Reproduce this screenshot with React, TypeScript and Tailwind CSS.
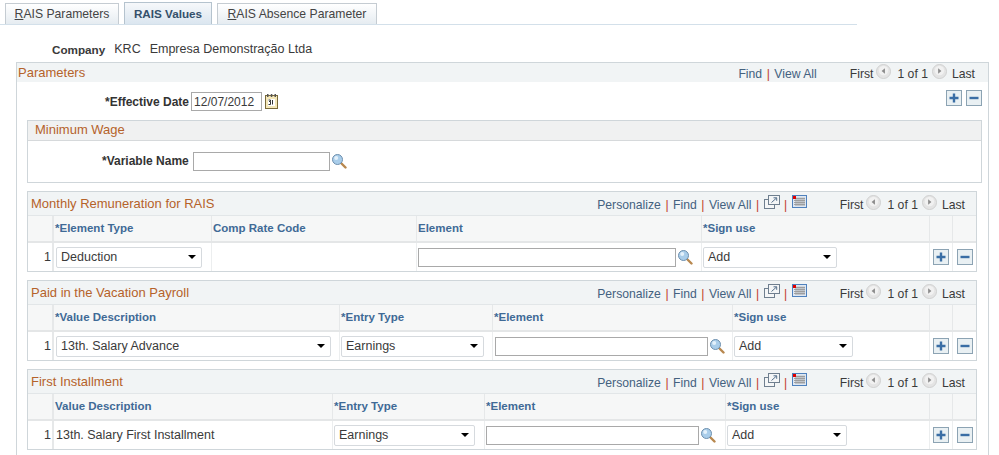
import React from 'react';

const LABEL = 'text-[12px] font-bold text-[#333]';

function Arrow({ dir }: { dir: 'left' | 'right' }) {
  return (
    <svg width="15" height="15" viewBox="0 0 16 16" className="mb-[6px]">
      <circle cx="8" cy="8" r="7.5" fill="#e4e4e4" stroke="#cfcfcf" />
      <circle cx="8" cy="7" r="5" fill="#f1f1f1" />
      <path d={dir === 'left' ? 'M9.5 4.5v6L6 7.5z' : 'M6.5 4.5v6l3.5-3z'} fill="#8c8c8c" />
    </svg>
  );
}

function AddButton() {
  return (
    <svg width="16" height="16" viewBox="0 0 16 16">
      <rect x="0.5" y="0.5" width="15" height="15" fill="#e9f0f3" stroke="#8ca3b3" />
      <path d="M6.8 3.5h2.4v3.3h3.3v2.4H9.2v3.3H6.8V9.2H3.5V6.8h3.3z" fill="#3a6ea5" />
    </svg>
  );
}

function RemoveButton() {
  return (
    <svg width="16" height="16" viewBox="0 0 16 16">
      <rect x="0.5" y="0.5" width="15" height="15" fill="#e9f0f3" stroke="#8ca3b3" />
      <rect x="3.5" y="6.8" width="9" height="2.4" fill="#3a6ea5" />
    </svg>
  );
}

function Lookup() {
  return (
    <svg width="16" height="16" viewBox="0 0 16 16" className="shrink-0">
      <path d="M9.5 9.5l5 5" stroke="#b8884f" strokeWidth="2.4" strokeLinecap="round" />
      <circle cx="6.5" cy="6.5" r="5" fill="#a9cdea" stroke="#6d8fae" />
      <circle cx="5.2" cy="5" r="2" fill="#e4f1fb" />
    </svg>
  );
}

function Calendar() {
  return (
    <svg width="13" height="15" viewBox="0 0 13 15">
      <rect x="0.5" y="1.5" width="12" height="13" fill="#f4e7b8" stroke="#7a6a3a" />
      <rect x="2" y="0" width="1.5" height="3" fill="#555" />
      <rect x="5.8" y="0" width="1.5" height="3" fill="#555" />
      <rect x="9.5" y="0" width="1.5" height="3" fill="#555" />
      <rect x="3" y="5" width="7" height="7" fill="#fff" />
      <path d="M3.5 6h2v1.5h-1.5M5.5 7.5v3h-2M7.5 6v4.5" fill="none" stroke="#333" />
    </svg>
  );
}

function NewWindow() {
  return (
    <svg width="16" height="14" viewBox="0 0 16 14">
      <rect x="0.5" y="4.5" width="10" height="9" fill="#f4f6f7" stroke="#6f7f8f" />
      <rect x="4.5" y="0.5" width="11" height="9" fill="#f4f6f7" stroke="#6f7f8f" />
      <path d="M7.5 7.5l5-4.5M9.5 2.8h3.2v3" fill="none" stroke="#55708c" />
    </svg>
  );
}

function GridIcon() {
  return (
    <svg width="15" height="13" viewBox="0 0 15 13">
      <rect x="0.5" y="0.5" width="14" height="12" fill="#dfe8f3" stroke="#4f81bd" />
      <path d="M2 3.5h11M2 5.5h11M2 7.5h11M2 9.5h11M4 2.5v8.5M6 2.5v8.5M8 2.5v8.5M10 2.5v8.5M12 2.5v8.5" stroke="#9a9a9a" strokeWidth="0.9" />
      <rect x="1" y="1" width="3" height="3" fill="#e00000" />
    </svg>
  );
}

function Select({ value, width, className }: { value: string; width: string; className?: string }) {
  return (
    <div className={`flex h-[21px] items-center justify-between rounded-[2px] border border-[#d6dade] bg-white pl-[4px] pr-[4px] text-[12.5px] text-[#3a3a3a] ${width} ${className ?? ''}`}>
      <span>{value}</span>
      <span className="mr-[1px] h-0 w-0 border-x-[4px] border-t-[4px] border-x-transparent border-t-black" />
    </div>
  );
}

function TextInput({ width }: { width: string }) {
  return <div className={`h-[19px] border border-[#a9a9a9] bg-white ${width}`} />;
}

function Sep() {
  return <span className="mx-[4.5px] text-[#c0392b]">|</span>;
}

function Pager({ tools }: { tools?: boolean }) {
  return (
    <div className="flex items-center pt-[3px] text-[12.2px] text-[#44617f]">
      {tools && <span>Personalize</span>}
      {tools && <Sep />}
      <span>Find</span>
      <Sep />
      <span>View All</span>
      {tools && <Sep />}
      {tools && <span className="mb-[6px]"><NewWindow /></span>}
      {tools && <Sep />}
      {tools && <span className="mb-[8px]"><GridIcon /></span>}
      <span className="ml-[33px] text-[#3a3a3a]">First</span>
      <span className="ml-[3px] mr-[6px]"><Arrow dir="left" /></span>
      <span className="text-[#3a3a3a]">1 of 1</span>
      <span className="ml-[4px] mr-[5px]"><Arrow dir="right" /></span>
      <span className="text-[#3a3a3a]">Last</span>
    </div>
  );
}

type GridProps = {
  title: string;
  cols: string;
  headers: string[];
  cells: React.ReactNode[];
  className?: string;
};

function DataGrid({ title, cols, headers, cells, className }: GridProps) {
  return (
    <section className={`ml-[10px] w-[950px] border border-[#cfd6da] ${className ?? ''}`}>
      <div className="flex h-[23px] items-center justify-between bg-[#f1f4f5] pl-[3px] pr-[11px]">
        <h3 className="text-[13px] text-[#b5622a]">{title}</h3>
        <Pager tools />
      </div>
      <div className={`grid h-[26px] items-center border-t border-[#e2e6e8] bg-[#f6f7f7] ${cols}`}>
        <div className="h-full border-r-[2px] border-[#e6e8e9]" />
        {headers.map((h) => (
          <div key={h} className="flex h-full items-center border-r border-[#e6e8e9] pl-[1px] text-[11.5px] font-bold text-[#3f6a96]">{h}</div>
        ))}
        <div className="h-full border-r border-[#e6e8e9]" />
        <div className="h-full" />
      </div>
      <div className={`grid h-[30px] border-t-[2px] border-[#e4e6e7] bg-white ${cols}`}>
        <div className="flex items-center justify-end border-r-[2px] border-[#e6e8e9] pr-[1px] text-[12.5px] text-[#3a3a3a]">1</div>
        {cells.map((c, i) => (
          <div key={i} className="flex items-center border-r border-[#eceeef] pl-[1px] text-[12.5px] text-[#3a3a3a]">{c}</div>
        ))}
        <div className="flex items-center justify-center border-r border-[#eceeef]"><AddButton /></div>
        <div className="flex items-center justify-center"><RemoveButton /></div>
      </div>
    </section>
  );
}

function ElementInput({ width, className }: { width: string; className?: string }) {
  return (
    <div className={`flex items-center gap-[1px] ${className ?? ''}`}>
      <TextInput width={width} />
      <Lookup />
    </div>
  );
}

export default function App() {
  return (
    <div className="h-[455px] w-[999px] overflow-hidden bg-white font-['Liberation_Sans',Arial,sans-serif]">
      {/* Tabs */}
      <nav className="ml-0 flex h-[25px] w-[857px] items-end gap-[5px] border-b border-[#d3e0ea] pl-[5px] pt-[3px] text-[12.2px]">
        <div className="flex h-[21px] w-[114px] items-center justify-center border border-b-0 border-[#c5ccd2] bg-gradient-to-b from-white to-[#e6ecf1] text-[#444]"><span><u>R</u>AIS Parameters</span></div>
        <div className="flex h-[22px] w-[88px] items-center justify-center border border-b-0 border-[#b5c3ce] bg-gradient-to-b from-[#f6f8fa] to-[#dbe6f0] pt-[1px] text-[11.7px] font-bold text-[#34506b]">RAIS Values</div>
        <div className="flex h-[21px] w-[160px] items-center justify-center border border-b-0 border-[#c5ccd2] bg-gradient-to-b from-white to-[#e6ecf1] text-[#444]"><span><u>R</u>AIS Absence Parameter</span></div>
      </nav>

      {/* Company */}
      <div className="flex h-[37px] items-end pb-[3px] pl-[52px] text-[12.5px] text-[#3a3a3a]">
        <span className="text-[11.7px] font-bold">Company</span>
        <span className="ml-[9px]">KRC</span>
        <span className="ml-[9px]">Empresa Demonstração Ltda</span>
      </div>

      {/* Parameters */}
      <main className="ml-[16px] h-[393px] w-[973px] border border-b-0 border-[#cfd6da]">
        <div className="flex h-[19px] items-center justify-between bg-[#f1f4f5] pl-[1px] pr-[13px]">
          <h2 className="text-[13px] text-[#b5622a]">Parameters</h2>
          <Pager />
        </div>

        <div className="flex h-[38px] items-start justify-between pr-[6px]">
          <div className="ml-[88px] mt-[10px] flex items-center">
            <span className={LABEL}>*Effective Date</span>
            <div className="ml-[2px] flex h-[19px] w-[71px] items-center border border-[#a9a9a9] pl-[2px] text-[12px] text-[#3a3a3a]">12/07/2012</div>
            <span className="ml-[3px]"><Calendar /></span>
          </div>
          <div className="mt-[8px] flex gap-[4px]">
            <AddButton />
            <RemoveButton />
          </div>
        </div>

        {/* Minimum Wage */}
        <section className="ml-[10px] h-[63px] w-[955px] border border-[#cfd6da]">
          <div className="flex h-[20px] items-center border-b border-[#d6d9db] bg-[#f0f1f1] pb-[1px] pl-[7px] text-[13px] text-[#b5622a]">Minimum Wage</div>
          <div className="flex h-[40px] items-center pl-[74px]">
            <span className={LABEL}>*Variable Name</span>
            <div className="ml-[4px] flex items-center gap-[1px]">
              <TextInput width="w-[137px]" />
              <Lookup />
            </div>
          </div>
        </section>

        <DataGrid
          className="mt-[8px]"
          title="Monthly Remuneration for RAIS"
          cols="grid-cols-[26px_158px_205px_285px_228px_23px_1fr]"
          headers={['*Element Type', 'Comp Rate Code', 'Element', '*Sign use']}
          cells={[
            <Select value="Deduction" width="w-[146px]" className="ml-[1px]" />,
            null,
            <ElementInput width="w-[258px]" />,
            <Select value="Add" width="w-[134px]" />,
          ]}
        />
        <DataGrid
          className="mt-[8px]"
          title="Paid in the Vacation Payroll"
          cols="grid-cols-[26px_286px_153px_240px_197px_23px_1fr]"
          headers={['*Value Description', '*Entry Type', '*Element', '*Sign use']}
          cells={[
            <Select value="13th. Salary Advance" width="w-[275px]" className="ml-[1px]" />,
            <Select value="Earnings" width="w-[143px]" />,
            <ElementInput width="w-[213px]" className="ml-[1px]" />,
            <Select value="Add" width="w-[119px]" />,
          ]}
        />
        <DataGrid
          className="mt-[8px]"
          title="First Installment"
          cols="grid-cols-[26px_279px_152px_241px_204px_23px_1fr]"
          headers={['Value Description', '*Entry Type', '*Element', '*Sign use']}
          cells={[
            <span className="ml-[1px]">13th. Salary First Installment</span>,
            <Select value="Earnings" width="w-[141px]" />,
            <ElementInput width="w-[213px]" />,
            <Select value="Add" width="w-[120px]" />,
          ]}
        />
      </main>
    </div>
  );
}
